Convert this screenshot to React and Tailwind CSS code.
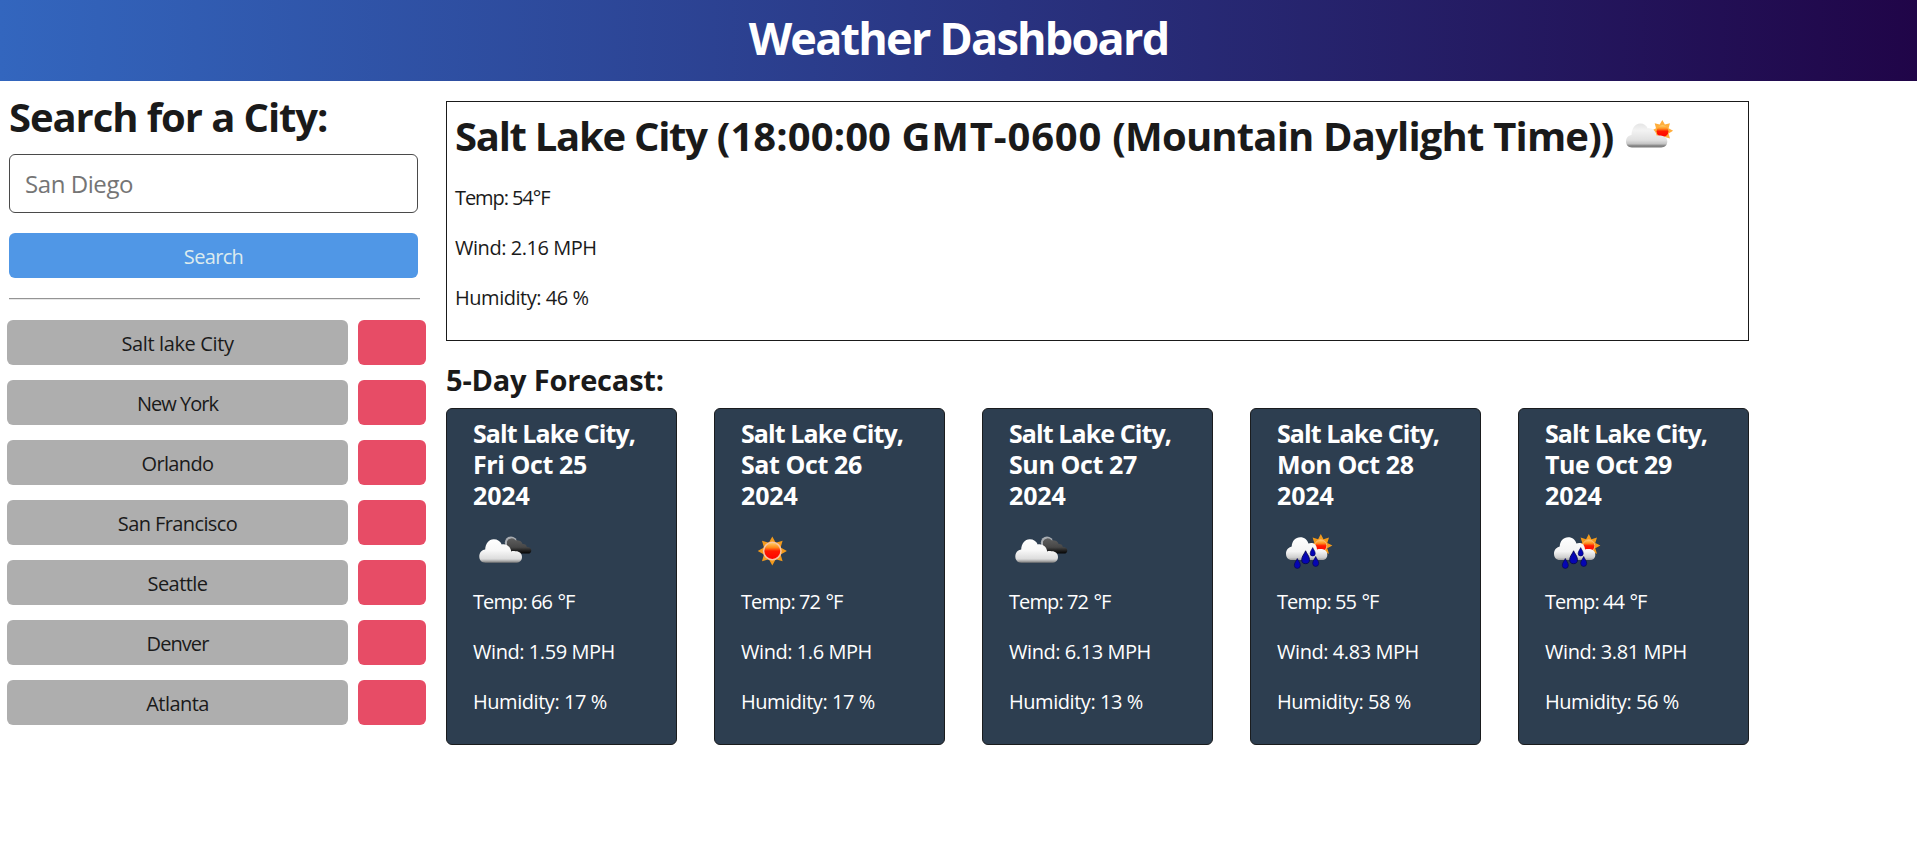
const cities = [
  { name: "Salt lake City", tracking: "tracking-[-0.37px]" },
  { name: "New York", tracking: "tracking-[-0.97px]" },
  { name: "Orlando", tracking: "tracking-[-0.63px]" },
  { name: "San Francisco", tracking: "tracking-[-0.6px]" },
  { name: "Seattle", tracking: "tracking-[-0.54px]" },
  { name: "Denver", tracking: "tracking-[-0.93px]" },
  { name: "Atlanta", tracking: "tracking-[-0.56px]" },
];

const forecast = [
  { date: "Fri Oct 25 2024", icon: "clouds", temp: "66", wind: "1.59", humidity: "17" },
  { date: "Sat Oct 26 2024", icon: "sun", temp: "72", wind: "1.6", humidity: "17" },
  { date: "Sun Oct 27 2024", icon: "clouds", temp: "72", wind: "6.13", humidity: "13" },
  { date: "Mon Oct 28 2024", icon: "rain", temp: "55", wind: "4.83", humidity: "58" },
  { date: "Tue Oct 29 2024", icon: "rain", temp: "44", wind: "3.81", humidity: "56" },
];

// Eight-pointed star behind the sun's disc
function starPoints(cx, cy, outer, inner) {
  return Array.from({ length: 16 }, (_, i) => {
    const r = i % 2 ? inner : outer;
    const a = (i * Math.PI) / 8 - Math.PI / 2;
    return `${(cx + r * Math.cos(a)).toFixed(2)},${(cy + r * Math.sin(a)).toFixed(2)}`;
  }).join(" ");
}

function IconDefs() {
  return (
    <svg className="absolute size-0" aria-hidden="true">
      <defs>
        <linearGradient id="cloudFill" gradientUnits="userSpaceOnUse" x1="0" y1="18" x2="0" y2="43">
          <stop offset="0" stopColor="#ffffff" />
          <stop offset="0.5" stopColor="#f7f7f7" />
          <stop offset="0.84" stopColor="#dcdcdc" />
          <stop offset="0.93" stopColor="#a3a3a3" />
          <stop offset="1" stopColor="#6e6e6e" />
        </linearGradient>
        <linearGradient id="rainCloudFill" gradientUnits="userSpaceOnUse" x1="0" y1="17" x2="0" y2="41">
          <stop offset="0" stopColor="#ffffff" />
          <stop offset="0.6" stopColor="#f4f4f4" />
          <stop offset="0.85" stopColor="#cfcfcf" />
          <stop offset="1" stopColor="#8a8a8a" />
        </linearGradient>
        <linearGradient id="dayCloudFill" gradientUnits="userSpaceOnUse" x1="0" y1="12" x2="0" y2="36.5">
          <stop offset="0" stopColor="#e4e4e4" />
          <stop offset="0.3" stopColor="#f3f3f3" />
          <stop offset="0.7" stopColor="#e0e0e0" />
          <stop offset="0.85" stopColor="#c4c4c4" />
          <stop offset="0.92" stopColor="#8b8b8b" />
          <stop offset="1" stopColor="#777777" />
        </linearGradient>
        <linearGradient id="darkCloudFill" gradientUnits="userSpaceOnUse" x1="0" y1="17" x2="0" y2="34">
          <stop offset="0" stopColor="#626262" />
          <stop offset="0.6" stopColor="#474747" />
          <stop offset="0.82" stopColor="#1c1c1c" />
          <stop offset="1" stopColor="#000000" />
        </linearGradient>
        <linearGradient id="sunFill" x1="0" y1="0" x2="0" y2="1">
          <stop offset="0" stopColor="#ffd46a" />
          <stop offset="0.3" stopColor="#ff8a1c" />
          <stop offset="0.5" stopColor="#ff1a00" />
          <stop offset="1" stopColor="#ff0000" />
        </linearGradient>
      </defs>
    </svg>
  );
}

function SunIcon() {
  return (
    <svg className="block size-[62px]" viewBox="0 0 62 62">
      <polygon points={starPoints(31.3, 31, 14.6, 9)} fill="#f39a1b" />
      <circle cx="31.3" cy="31" r="8.7" fill="url(#sunFill)" stroke="#f8c5a4" strokeWidth="1.5" />
    </svg>
  );
}

function CloudsIcon() {
  return (
    <svg className="block size-[62px]" viewBox="0 0 62 62">
      <circle cx="38" cy="22.6" r="6.2" fill="#a9adb2" />
      <path
        d="M34 33.6V21.5a5 5 0 0 1 8.6-1.2c3-.4 6 .6 7 3.600 2.700-.1 4 1 4.200 3.200 2.800.2 4.500 1.400 4.500 3.400 0 1.900-1.300 3.100-3.300 3.100Z"
        fill="url(#darkCloudFill)"
      />
      <path
        d="M12.500 42.700c-4 0-6.200-2.700-6.200-6.200 0-3.400 2.200-6.400 5.900-6.900C12.400 23.600 15.800 19.200 20.700 19.200c3.900 0 6.700 2 8 5.300 4.700-.9 9 2.200 9.500 7.100 1.600-.7 2.700-.6 4-.3 3.700-.4 6.800 2 6.800 5.600 0 3.600-2.600 5.800-6.500 5.800Z"
        fill="url(#cloudFill)"
      />
    </svg>
  );
}

function Drop({ x, y, h }) {
  return (
    <path
      transform={`translate(${x} ${y}) scale(${h / 12})`}
      d="M0 0C.8 2.500 3.600 5 3.600 8.200A3.600 3.700 0 0 1-3.600 8.200C-3.600 5-.8 2.500 0 0Z"
      fill="#0505b4"
      stroke="#06064f"
      strokeWidth="0.8"
    />
  );
}

function RainIcon() {
  return (
    <svg className="block size-[62px]" viewBox="0 0 62 62">
      <polygon points={starPoints(43.8, 25.6, 11.6, 7)} fill="#f39a1b" />
      <circle cx="43.8" cy="25.8" r="6" fill="url(#sunFill)" stroke="#f8b878" strokeWidth="0.9" />
      <path
        d="M15 40c-4 0-6-3-6-6.300 0-3.700 2.300-6.300 5.700-7.200.3-5.500 3.800-9.200 8.500-9.200 4.300 0 7.300 2.600 8.200 6.300 4.700-1.700 8.500 1 8.600 5.800 5.800-1 10.300.6 10.300 5.300 0 3.300-2 5.300-5.300 5.300Z"
        fill="url(#rainCloudFill)"
      />
      <Drop x={28.6} y={30.8} h={13} />
      <Drop x={35.7} y={27.6} h={8.5} />
      <Drop x={20.3} y={38.5} h={10} />
      <Drop x={38.7} y={36.5} h={10} />
    </svg>
  );
}

function PartlyCloudyIcon() {
  return (
    <svg className="block size-[50px]" viewBox="0 0 50 50">
      <polygon points={starPoints(38.3, 19.8, 10.8, 6.8)} fill="#ffae3d" />
      <circle cx="38.5" cy="20.2" r="5.9" fill="url(#sunFill)" />
      <path
        d="M8 36.400c-3.900 0-6-2.600-6-5.900 0-3.400 2.300-6 5.500-6.400.3-6.700 3.500-11.700 8.600-11.700 3.900 0 6.600 2 7.600 5.100 4.200-.8 8 2.100 8.900 7 5.900-.4 10.700 1 10.700 5.800 0 3.900-2.300 6.100-6.100 6.100Z"
        fill="url(#dayCloudFill)"
      />
    </svg>
  );
}

const icons = { sun: SunIcon, clouds: CloudsIcon, rain: RainIcon };

function ForecastCard({ date, icon, temp, wind, humidity }) {
  const Icon = icons[icon];
  return (
    <article className="h-[337px] w-[231px] rounded-[6px] border border-[#1a1c1e] bg-[#2d3e50] pt-[9px] pr-5 pl-[26px] text-white">
      <h4 className="text-[25px] leading-[31px] font-bold">
        <span className="block tracking-[-0.9px]">Salt Lake City,</span>
        <span className="block tracking-[-0.4px]">{date.slice(0, 10)}</span>
        <span className="block tracking-[-0.13px]">{date.slice(11)}</span>
      </h4>
      <div className="mt-[9px] mb-[7px]">
        <Icon />
      </div>
      <div className="flex flex-col gap-[25px] text-[20px] leading-[25px]">
        <p className="tracking-[-0.9px]">
          Temp: {temp} <span className="ml-px">°F</span>
        </p>
        <p className="tracking-[-0.44px]">Wind: {wind} MPH</p>
        <p className="tracking-[-0.45px]">Humidity: {humidity} %</p>
      </div>
    </article>
  );
}

export default function App() {
  return (
    <div className="min-h-screen bg-white font-['Open_Sans','Noto_Sans',sans-serif] text-[#1a1a1a]">
      <IconDefs />
      <header className="h-[81px] bg-linear-to-r/srgb from-[#3366be] to-[#200548] text-center">
        <h1 className="text-[45px] leading-[75px] font-bold tracking-[-1.78px] text-white">Weather Dashboard</h1>
      </header>

      <div className="flex">
        <aside className="w-[446px] shrink-0">
          <div className="flex w-[420px] flex-col pl-[9px]">
            <h2 className="h-[73px] text-[40px] leading-[71px] font-bold tracking-[-1.08px]">Search for a City:</h2>
            <input
              className="h-[59px] w-[409px] rounded-[6px] border border-[#4a4a4a] pl-[15px] text-[24px] tracking-[-0.43px] placeholder:text-[#757575]"
              placeholder="San Diego"
            />
            <button className="mt-5 h-[45px] w-[409px] rounded-[6px] bg-[#5097e6] pt-0.5 text-[20px] tracking-[-0.67px] text-[#dcebee]">
              Search
            </button>
            <hr className="mt-5 w-[411px] border-t border-b border-t-[#949494] border-b-[#e8e8e8]" />
          </div>
          <ul className="mt-5 flex flex-col gap-[15px] pl-[7px]">
            {cities.map(({ name, tracking }) => (
              <li key={name} className="flex gap-[10px]">
                <button className={"h-[45px] w-[341px] rounded-[6px] bg-[#aeaeae] pt-0.5 text-[20px] " + tracking}>
                  {name}
                </button>
                <button className="h-[45px] w-[68px] rounded-[6px] bg-[#e74c66]" aria-label={"Delete " + name} />
              </li>
            ))}
          </ul>
        </aside>

        <main className="w-[1303px] pt-5">
          <section className="h-[240px] border border-[#1a1a1a] pt-1 pl-2">
            <div className="flex items-center">
              <h2 className="text-[40px] leading-[60px] font-bold whitespace-nowrap">
                <span className="mr-px tracking-[-1.28px]">Salt Lake City </span>
                <span className="tracking-[0.08px]">(18:00:00 </span>
                <span className="mr-[-1px] tracking-[0.8px]">GMT-0600 </span>
                <span className="tracking-[-0.83px]">(Mountain Daylight Time))</span>
              </h2>
              <div className="ml-[10px]">
                <PartlyCloudyIcon />
              </div>
            </div>
            <div className="mt-[19px] flex flex-col gap-[25px] text-[20px] leading-[25px]">
              <p className="tracking-[-1.08px]">Temp: 54°F</p>
              <p className="tracking-[-0.46px]">Wind: 2.16 MPH</p>
              <p className="tracking-[-0.46px]">Humidity: 46 %</p>
            </div>
          </section>

          <h3 className="mt-5 h-[47px] text-[29px] leading-[38px] font-bold tracking-[-0.2px]">5-Day Forecast:</h3>
          <div className="flex justify-between">
            {forecast.map((day) => (
              <ForecastCard key={day.date} {...day} />
            ))}
          </div>
        </main>
      </div>
    </div>
  );
}
